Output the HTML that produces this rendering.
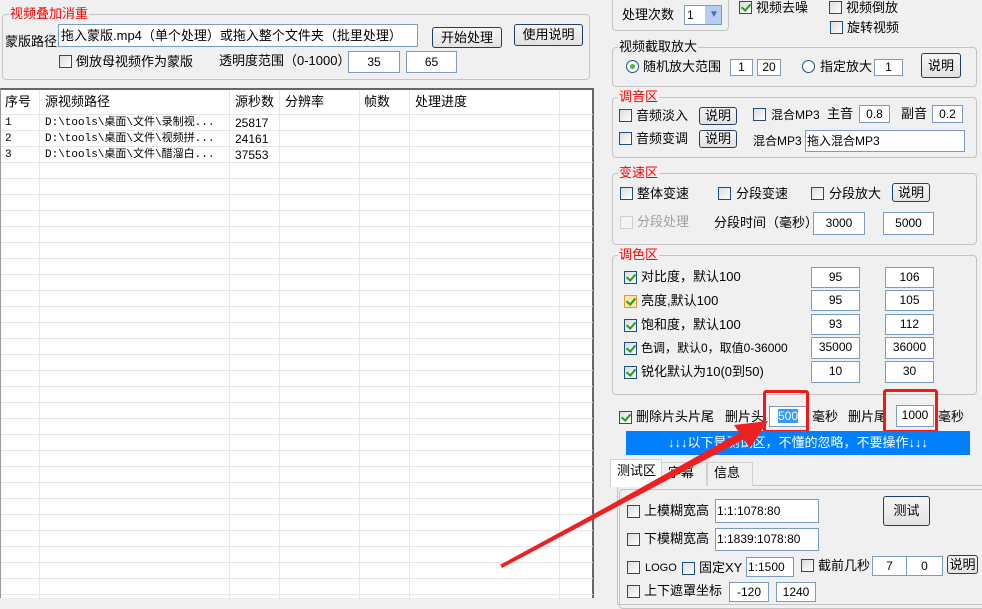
<!DOCTYPE html>
<html><head><meta charset="utf-8"><style>
*{box-sizing:border-box;margin:0;padding:0}
body{width:982px;height:593px;overflow:hidden;background:#f0f0f0;position:relative;font-family:"Liberation Sans","WenQuanYi Zen Hei","Noto Sans CJK SC",sans-serif;font-size:13px;color:#000}
.a{position:absolute;white-space:nowrap;line-height:16px}
.g{position:absolute;border:1px solid #c4c4c4;border-radius:4px}
.gt{position:absolute;background:#f0f0f0;padding:0 1px;line-height:14px;white-space:nowrap}
.red{color:#f00}
.in{position:absolute;background:#fff;border:1px solid #7a9cc0;text-align:center;line-height:18px;font-size:12px;white-space:nowrap;overflow:hidden}
.btn{position:absolute;border:1px solid #1c3f6e;border-radius:3px;background:linear-gradient(#f6f6f6,#e2e2e2);text-align:center;font-size:13px;white-space:nowrap}
.cb{position:absolute;width:13px;height:13px;border:1px solid #1c4f83;background:linear-gradient(135deg,#dcdcdc,#fff)}
.cb.k::after{content:"";position:absolute;left:3px;top:0px;width:4px;height:7px;border:solid #1aa21a;border-width:0 2px 2px 0;transform:rotate(40deg)}
.t{position:absolute;background:#fff;border-top:2px solid #666;border-left:1px solid #999;border-right:2px solid #666}
.m{font-family:"Liberation Mono","WenQuanYi Zen Hei","Noto Sans CJK SC",monospace;font-size:11px}
</style></head><body>
<div class="g" style="left:2px;top:14px;width:588px;height:66px"></div>
<div class="gt red" style="left:9px;top:7px">视频叠加消重</div>
<div class="a" style="left:5px;top:34px">蒙版路径</div>
<div class="in" style="left:58px;top:24px;width:360px;height:23px;text-align:left;padding-left:2px;line-height:21px;font-size:13px">拖入蒙版.mp4（单个处理）或拖入整个文件夹（批里处理）</div>
<div class="btn" style="left:432px;top:27px;width:70px;height:21px;line-height:19px">开始处理</div>
<div class="btn" style="left:514px;top:24px;width:69px;height:22px;line-height:20px">使用说明</div>
<div class="cb" style="left:59px;top:55px"></div>
<div class="a" style="left:76px;top:54px">倒放母视频作为蒙版</div>
<div class="a" style="left:219px;top:53px">透明度范围（0-1000）</div>
<div class="in" style="left:348px;top:51px;width:52px;height:22px;line-height:20px">35</div>
<div class="in" style="left:406px;top:51px;width:51px;height:22px;line-height:20px">65</div>
<div class="t" style="left:0;top:88px;width:594px;height:510px">
<svg width="592" height="510" style="position:absolute;left:0;top:0">
<g stroke="#e6e6e6" stroke-width="1">
<line x1="38.5" y1="0" x2="38.5" y2="510"/><line x1="228.5" y1="0" x2="228.5" y2="510"/><line x1="278.5" y1="0" x2="278.5" y2="510"/><line x1="358.5" y1="0" x2="358.5" y2="510"/><line x1="408.5" y1="0" x2="408.5" y2="510"/><line x1="558.5" y1="0" x2="558.5" y2="510"/>
<line x1="0" y1="24.5" x2="592" y2="24.5"/><line x1="0" y1="40.5" x2="592" y2="40.5"/><line x1="0" y1="56.5" x2="592" y2="56.5"/><line x1="0" y1="72.5" x2="592" y2="72.5"/><line x1="0" y1="88.5" x2="592" y2="88.5"/><line x1="0" y1="104.5" x2="592" y2="104.5"/><line x1="0" y1="120.5" x2="592" y2="120.5"/><line x1="0" y1="136.5" x2="592" y2="136.5"/><line x1="0" y1="152.5" x2="592" y2="152.5"/><line x1="0" y1="168.5" x2="592" y2="168.5"/><line x1="0" y1="184.5" x2="592" y2="184.5"/><line x1="0" y1="200.5" x2="592" y2="200.5"/><line x1="0" y1="216.5" x2="592" y2="216.5"/><line x1="0" y1="232.5" x2="592" y2="232.5"/><line x1="0" y1="248.5" x2="592" y2="248.5"/><line x1="0" y1="264.5" x2="592" y2="264.5"/><line x1="0" y1="280.5" x2="592" y2="280.5"/><line x1="0" y1="296.5" x2="592" y2="296.5"/><line x1="0" y1="312.5" x2="592" y2="312.5"/><line x1="0" y1="328.5" x2="592" y2="328.5"/><line x1="0" y1="344.5" x2="592" y2="344.5"/><line x1="0" y1="360.5" x2="592" y2="360.5"/><line x1="0" y1="376.5" x2="592" y2="376.5"/><line x1="0" y1="392.5" x2="592" y2="392.5"/><line x1="0" y1="408.5" x2="592" y2="408.5"/><line x1="0" y1="424.5" x2="592" y2="424.5"/><line x1="0" y1="440.5" x2="592" y2="440.5"/><line x1="0" y1="456.5" x2="592" y2="456.5"/><line x1="0" y1="472.5" x2="592" y2="472.5"/><line x1="0" y1="488.5" x2="592" y2="488.5"/><line x1="0" y1="504.5" x2="592" y2="504.5"/>
</g></svg>
<div class="a" style="left:4px;top:4px">序号</div><div class="a" style="left:44px;top:4px">源视频路径</div><div class="a" style="left:234px;top:4px">源秒数</div><div class="a" style="left:284px;top:4px">分辨率</div><div class="a" style="left:363px;top:4px">帧数</div><div class="a" style="left:414px;top:4px">处理进度</div>
<div class="a m" style="left:4px;top:25px">1</div><div class="a m" style="left:44px;top:25px">D:\tools\桌面\文件\录制视...</div><div class="a" style="left:234px;top:25px;font-size:12px">25817</div>
<div class="a m" style="left:4px;top:41px">2</div><div class="a m" style="left:44px;top:41px">D:\tools\桌面\文件\视频拼...</div><div class="a" style="left:234px;top:41px;font-size:12px">24161</div>
<div class="a m" style="left:4px;top:57px">3</div><div class="a m" style="left:44px;top:57px">D:\tools\桌面\文件\醋溜白...</div><div class="a" style="left:234px;top:57px;font-size:12px">37553</div>
</div>
<div class="g" style="left:612px;top:-10px;width:117px;height:41px"></div>
<div class="a" style="left:622px;top:7px">处理次数</div>
<div class="in" style="left:684px;top:5px;width:38px;height:20px;text-align:left;padding-left:2px">1</div>
<div style="position:absolute;left:705px;top:6px;width:16px;height:18px;background:#b8ccf0"></div>
<div class="a" style="left:709px;top:7px;color:#4d6fa8;font-size:10px">▼</div>
<div class="cb k" style="left:739px;top:1px"></div><div class="a" style="left:756px;top:0px">视频去噪</div>
<div class="cb" style="left:829px;top:1px"></div><div class="a" style="left:846px;top:0px">视频倒放</div>
<div class="cb" style="left:830px;top:21px"></div><div class="a" style="left:847px;top:20px">旋转视频</div>
<div class="g" style="left:612px;top:47px;width:365px;height:40px"></div>
<div class="gt" style="left:618px;top:40px">视频截取放大</div>
<div style="position:absolute;left:626px;top:60px;width:13px;height:13px;border:1px solid #1c4f83;border-radius:50%;background:#fff"><div style="position:absolute;left:3px;top:3px;width:5px;height:5px;border-radius:50%;background:#3dbb3d"></div></div>
<div class="a" style="left:643px;top:59px">随机放大范围</div>
<div class="in" style="left:730px;top:59px;width:23px;height:17px;line-height:15px">1</div>
<div class="in" style="left:757px;top:59px;width:24px;height:17px;line-height:15px">20</div>
<div style="position:absolute;left:802px;top:60px;width:13px;height:13px;border:1px solid #1c4f83;border-radius:50%;background:#fff"></div>
<div class="a" style="left:820px;top:59px">指定放大</div>
<div class="in" style="left:874px;top:59px;width:29px;height:17px;line-height:15px">1</div>
<div class="btn" style="left:921px;top:53px;width:40px;height:25px;line-height:23px">说明</div>
<div class="g" style="left:612px;top:97px;width:365px;height:61px"></div>
<div class="gt red" style="left:618px;top:90px">调音区</div>
<div class="cb" style="left:619px;top:109px"></div><div class="a" style="left:636px;top:108px">音频淡入</div>
<div class="btn" style="left:699px;top:107px;width:38px;height:18px;line-height:16px">说明</div>
<div class="cb" style="left:753px;top:108px"></div><div class="a" style="left:771px;top:107px;font-size:12px">混合MP3</div>
<div class="a" style="left:827px;top:106px">主音</div>
<div class="in" style="left:859px;top:105px;width:31px;height:18px;line-height:16px">0.8</div>
<div class="a" style="left:901px;top:106px">副音</div>
<div class="in" style="left:932px;top:105px;width:31px;height:18px;line-height:16px">0.2</div>
<div class="cb" style="left:619px;top:132px"></div><div class="a" style="left:636px;top:131px">音频变调</div>
<div class="btn" style="left:699px;top:130px;width:38px;height:18px;line-height:16px">说明</div>
<div class="a" style="left:753px;top:133px;font-size:12px">混合MP3</div>
<div class="in" style="left:805px;top:130px;width:160px;height:22px;line-height:20px;text-align:left;padding-left:1px;font-size:12px">拖入混合MP3</div>
<div class="g" style="left:612px;top:173px;width:365px;height:72px"></div>
<div class="gt red" style="left:618px;top:166px">变速区</div>
<div class="cb" style="left:620px;top:187px"></div><div class="a" style="left:637px;top:186px">整体变速</div>
<div class="cb" style="left:718px;top:187px"></div><div class="a" style="left:736px;top:186px">分段变速</div>
<div class="cb" style="left:811px;top:187px"></div><div class="a" style="left:829px;top:186px">分段放大</div>
<div class="btn" style="left:892px;top:183px;width:38px;height:19px;line-height:17px">说明</div>
<div class="cb" style="left:620px;top:216px;border-color:#d0d0d0;background:#f4f4f4"></div><div class="a" style="left:637px;top:214px;color:#a0a0a0">分段处理</div>
<div class="a" style="left:714px;top:215px">分段时间（毫秒）</div>
<div class="in" style="left:813px;top:212px;width:52px;height:23px;line-height:21px">3000</div>
<div class="in" style="left:883px;top:212px;width:51px;height:23px;line-height:21px">5000</div>
<div class="g" style="left:612px;top:255px;width:365px;height:140px"></div>
<div class="gt red" style="left:618px;top:248px">调色区</div>
<div class="cb k" style="left:624px;top:271px"></div><div class="a" style="left:641px;top:269px">对比度，默认100</div>
<div class="in" style="left:811px;top:267px;width:49px;height:21px">95</div><div class="in" style="left:885px;top:267px;width:49px;height:21px">106</div>
<div class="cb k" style="left:624px;top:295px;border-color:#d8a030;background:#fbe6a8"></div><div class="a" style="left:641px;top:293px">亮度,默认100</div>
<div class="in" style="left:811px;top:290px;width:49px;height:21px">95</div><div class="in" style="left:885px;top:290px;width:49px;height:21px">105</div>
<div class="cb k" style="left:624px;top:319px"></div><div class="a" style="left:641px;top:317px">饱和度，默认100</div>
<div class="in" style="left:811px;top:314px;width:49px;height:21px">93</div><div class="in" style="left:885px;top:314px;width:49px;height:21px">112</div>
<div class="cb k" style="left:624px;top:342px"></div><div class="a" style="left:641px;top:340px;font-size:12px">色调，默认0，取值0-36000</div>
<div class="in" style="left:811px;top:337px;width:49px;height:22px">35000</div><div class="in" style="left:885px;top:337px;width:49px;height:22px">36000</div>
<div class="cb k" style="left:624px;top:366px"></div><div class="a" style="left:641px;top:364px">锐化默认为10(0到50)</div>
<div class="in" style="left:811px;top:361px;width:49px;height:22px">10</div><div class="in" style="left:885px;top:361px;width:49px;height:22px">30</div>
<div class="cb k" style="left:619px;top:411px"></div><div class="a" style="left:636px;top:409px">删除片头片尾</div>
<div class="a" style="left:725px;top:409px">删片头</div>
<div class="in" style="left:769px;top:406px;width:38px;height:21px"><span style="background:#3399ff;color:#fff">500</span></div>
<div class="a" style="left:812px;top:409px">毫秒</div>
<div class="a" style="left:848px;top:409px">删片尾</div>
<div class="in" style="left:896px;top:405px;width:38px;height:22px">1000</div>
<div class="a" style="left:938px;top:409px">毫秒</div>
<div style="position:absolute;left:763px;top:390px;width:46px;height:43px;border:3px solid #f01818;border-radius:3px"></div>
<div style="position:absolute;left:883px;top:389px;width:55px;height:44px;border:3px solid #f01818;border-radius:3px"></div>
<div class="a" style="left:626px;top:431px;width:344px;height:24px;background:#0080ff;color:#fff;text-align:center;line-height:24px">↓↓↓以下是测试区，不懂的忽略，不要操作↓↓↓</div>
<div style="position:absolute;left:617px;top:485px;width:370px;height:120px;border:1px solid #c4c4c4;background:#f0f0f0"></div>
<div style="position:absolute;left:661px;top:462px;width:46px;height:24px;border:1px solid #d0d0d0;border-bottom:none;background:#f0f0f0"></div>
<div style="position:absolute;left:707px;top:462px;width:46px;height:24px;border:1px solid #d0d0d0;border-bottom:none;background:#f0f0f0"></div>
<div style="position:absolute;left:610px;top:459px;width:52px;height:28px;border:1px solid #d0d0d0;border-bottom:none;background:#fff"></div>
<div class="a" style="left:617px;top:463px">测试区</div><div class="a" style="left:668px;top:465px">字幕</div><div class="a" style="left:714px;top:465px">信息</div>
<div class="g" style="left:619px;top:489px;width:370px;height:120px;border-radius:4px"></div>
<div class="cb" style="left:627px;top:505px"></div><div class="a" style="left:644px;top:503px">上模糊宽高</div>
<div class="in" style="left:715px;top:499px;width:104px;height:24px;line-height:22px;text-align:left;padding-left:1px">1:1:1078:80</div>
<div class="btn" style="left:883px;top:496px;width:47px;height:30px;line-height:28px">测试</div>
<div class="cb" style="left:627px;top:533px"></div><div class="a" style="left:644px;top:531px">下模糊宽高</div>
<div class="in" style="left:715px;top:528px;width:104px;height:23px;line-height:21px;text-align:left;padding-left:1px">1:1839:1078:80</div>
<div class="cb" style="left:627px;top:561px"></div><div class="a" style="left:645px;top:560px;font-size:11px">LOGO</div>
<div class="cb" style="left:682px;top:562px"></div><div class="a" style="left:699px;top:560px">固定XY</div>
<div class="in" style="left:746px;top:557px;width:48px;height:20px;text-align:left;padding-left:1px">1:1500</div>
<div class="cb" style="left:801px;top:559px"></div><div class="a" style="left:818px;top:558px">截前几秒</div>
<div class="in" style="left:872px;top:556px;width:35px;height:20px">7</div><div class="in" style="left:906px;top:556px;width:37px;height:20px">0</div>
<div class="btn" style="left:947px;top:555px;width:31px;height:19px;line-height:17px">说明</div>
<div class="cb" style="left:627px;top:585px"></div><div class="a" style="left:644px;top:583px">上下遮罩坐标</div>
<div class="in" style="left:729px;top:582px;width:40px;height:20px">-120</div><div class="in" style="left:776px;top:582px;width:40px;height:20px">1240</div>
<svg width="982" height="593" style="position:absolute;left:0;top:0">
<polygon points="501,566 746,429 750,436 502,568" fill="#f02020"/>
<line x1="501" y1="566" x2="748" y2="432" stroke="#f02020" stroke-width="3"/>
<polygon points="768,421 734,425 750,448" fill="#f02020"/>
</svg>
</body></html>
